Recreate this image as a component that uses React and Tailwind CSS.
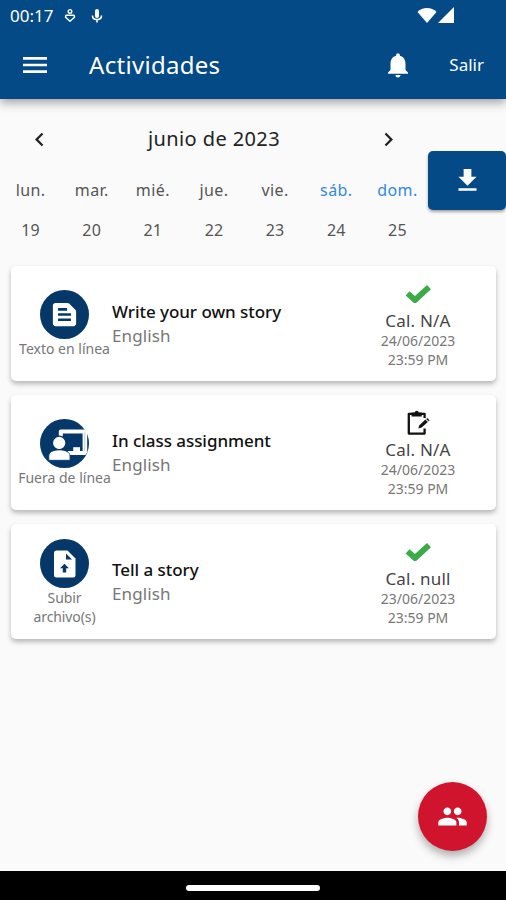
import React from "react";
import { MdMenu, MdNotifications, MdChevronLeft, MdChevronRight, MdFileDownload, MdPeople, MdTextSnippet } from "react-icons/md";

const days = [
  ["lun.", "19"], ["mar.", "20"], ["mié.", "21"], ["jue.", "22"], ["vie.", "23"], ["sáb.", "24"], ["dom.", "25"],
];

function Check() {
  return (
    <svg width="28" height="22" viewBox="0 0 28 22">
      <path d="M3.6 10.4 11 17 25 4.2" fill="none" stroke="#3aab47" strokeWidth="5.8" strokeLinejoin="round" />
    </svg>
  );
}

function ClipboardEdit() {
  return (
    <svg width="26" height="26" viewBox="0 0 26 26">
      <path d="M19.6 8V3.8H3.8V23.6H19.6V18.5" fill="none" stroke="#111" strokeWidth="2.3" strokeLinejoin="round" />
      <path d="M6.6 2.4H9.6A2.2 2.2 0 0 1 13.8 2.4H16.8V6.6H6.6Z" fill="#111" />
      <path d="M13.4 18.4 14.2 15.4 20.4 9.6 22.8 12 16.6 17.6Z" fill="#111" />
      <path d="M21.2 8.9 22.2 8 24.6 10.2 23.6 11.2Z" fill="#111" />
    </svg>
  );
}

function Board() {
  return (
    <svg width="49" height="49" viewBox="0 0 49 49">
      <path d="M20.8 18V12.4H44.6V33.9H28" fill="none" stroke="#fff" strokeWidth="4" strokeLinejoin="round" />
      <path d="M46.2 12V34" stroke="#fff" strokeWidth="2" />
      <path d="M44.8 13.5V32.5" stroke="#053768" strokeOpacity="0.35" strokeWidth="0.8" />
      <path d="M33.2 28.2H40V33H33.2Z" fill="#fff" />
      <circle cx="19.2" cy="24" r="6.8" fill="#fff" stroke="#053768" strokeWidth="1.3" />
      <path d="M8.8 41.3V37C8.8 33 13 30.9 19.3 30.9S30 33 30 37V41.3Z" fill="#fff" stroke="#053768" strokeWidth="0.8" strokeLinejoin="round" />
    </svg>
  );
}

function UploadDoc() {
  return (
    <svg width="49" height="49" viewBox="0 0 49 49">
      <path d="M16.5 11.5H27.5L35.5 19.5V36A2.5 2.5 0 0 1 33 38.5H16.5A2.5 2.5 0 0 1 14 36V14A2.5 2.5 0 0 1 16.5 11.5Z" fill="#fff" />
      <path d="M26 14.5V20.5H32Z" fill="#053768" />
      <path d="M24.5 24.7 29 29.2H26.2V33.5H22.8V29.2H20Z" fill="#053768" />
    </svg>
  );
}

const cards = [
  { icon: <MdTextSnippet size={31} />, type: "Texto en línea", title: "Write your own story", status: <Check />, grade: "Cal. N/A", date: "24/06/2023" },
  { icon: <Board />, type: "Fuera de línea", title: "In class assignment", status: <ClipboardEdit />, grade: "Cal. N/A", date: "24/06/2023" },
  { icon: <UploadDoc />, type: "Subir archivo(s)", title: "Tell a story", status: <Check />, grade: "Cal. null", date: "23/06/2023", wrap: true },
];

function Card({ c }) {
  return (
    <article className="flex h-[115px] rounded-[5px] bg-white shadow-[0_3px_5px_rgba(0,0,0,0.27)]">
      <div className={`flex w-[93px] shrink-0 flex-col items-center ml-[7px] ${c.wrap ? "pt-[15px]" : "pt-[24px]"}`}>
        <div className="flex size-[49px] shrink-0 items-center justify-center rounded-full bg-[#053768] text-white">{c.icon}</div>
        <div className={`text-center text-[14px] leading-[19px] text-[#777] ${c.wrap ? "w-[70px] tracking-[-0.1px]" : "whitespace-nowrap"}`}>{c.type}</div>
      </div>
      <div className="ml-[1px] flex-1 pt-[34px]">
        <h2 className="whitespace-nowrap text-[17px] font-medium leading-[24px] tracking-[-0.05px] text-[#111]">{c.title}</h2>
        <p className="text-[17px] leading-[23px] tracking-[0.1px] text-[#777]">English</p>
      </div>
      <div className="mr-[17px] flex w-[122px] flex-col items-center text-[#777]">
        <div className="flex h-[45px] items-end justify-center pb-[7px]">
          <div className="flex h-[21px] items-center justify-center">{c.status}</div>
        </div>
        <div className="text-[17px] leading-[20px] tracking-[0.2px] text-[#444]">{c.grade}</div>
        <div className="text-[14px] leading-[20px]">{c.date}</div>
        <div className="text-[14px] leading-[17px]">23:59 PM</div>
      </div>
    </article>
  );
}

export default function App() {
  return (
    <div className="flex h-[900px] w-[506px] flex-col overflow-hidden bg-[#fafafa] font-['Noto_Sans',sans-serif]">
      <header className="h-[99px] shrink-0 bg-[#034a86] text-white shadow-[0_3px_10px_rgba(0,0,0,0.4)]">
        <div className="flex h-[32px] items-center pl-[10px] text-white">
          <span className="w-[54px] text-[17px] leading-[32px]">00:17</span>
          <svg width="12" height="16" viewBox="0 0 12 16" className="shrink-0">
            <circle cx="6" cy="3.4" r="1.8" fill="none" stroke="#fff" strokeWidth="1.4" />
            <path d="M2 7.2H10L10.5 9.2 6 13.2 1.5 9.2Z" fill="none" stroke="#fff" strokeWidth="1.5" strokeLinejoin="round" />
          </svg>
          <svg width="12" height="16" viewBox="0 0 12 16" className="ml-[15px] shrink-0">
            <rect x="4" y="1" width="4" height="9" rx="2" fill="#fff" />
            <path d="M1.5 7.5C1.5 13 10.5 13 10.5 7.5M6 11.5V14.5" fill="none" stroke="#fff" strokeWidth="1.6" />
          </svg>
          <svg width="38" height="18" viewBox="0 0 38 18" className="ml-auto mr-[51px]">
            <path d="M0.5 5C5-.3 15-.3 19.5 5L10 16Z" fill="#fff" />
            <path d="M21 16H37V0Z" fill="#fff" />
          </svg>
        </div>
        <div className="flex h-[65px] items-center pl-[19px]">
          <MdMenu size={32} />
          <h1 className="ml-[38px] text-[24px] leading-[32px] tracking-[0.3px]">Actividades</h1>
          <MdNotifications size={30} className="ml-auto" />
          <span className="ml-[36px] mr-[22px] text-[17px]">Salir</span>
        </div>
      </header>
      <section className="flex h-[166px] shrink-0">
        <div className="w-[428px]">
          <div className="flex h-[80px] items-center justify-between pl-[26px] pr-[26px] text-[#222]">
            <MdChevronLeft size={27} />
            <span className="text-[20px] leading-[28px] tracking-[0.4px]">junio de 2023</span>
            <MdChevronRight size={27} />
          </div>
          <div className="grid grid-cols-7 text-center text-[16px] text-[#555]">
            {days.map(([n, d], i) => (
              <div key={d}>
                <div className={`h-[40px] leading-[22px] tracking-[0.4px] ${i > 4 ? "text-[#2f8ae0]" : ""}`}>{n}</div>
                <div className="leading-[22px] tracking-[0.2px]">{d}</div>
              </div>
            ))}
          </div>
        </div>
        <button className="mt-[52px] flex h-[59px] w-[78px] items-center justify-center rounded-[5px] bg-[#034a86] text-white shadow-[0_2px_3px_rgba(0,0,0,0.35)]">
          <MdFileDownload size={31} />
        </button>
      </section>
      <main className="flex flex-1 flex-col gap-[14px] pl-[11px] pr-[10px] pt-[1px]">
        {cards.map((c) => <Card key={c.title} c={c} />)}
      </main>
      <button className="mb-[20px] mr-[19px] flex size-[69px] shrink-0 items-center justify-center self-end rounded-full bg-[#d1142d] text-white shadow-[0_5px_8px_rgba(0,0,0,0.3)]">
        <MdPeople size={31} />
      </button>
      <footer className="flex h-[29px] shrink-0 justify-center bg-black pt-[14px]">
        <div className="h-[6px] w-[134px] rounded-full bg-white" />
      </footer>
    </div>
  );
}
